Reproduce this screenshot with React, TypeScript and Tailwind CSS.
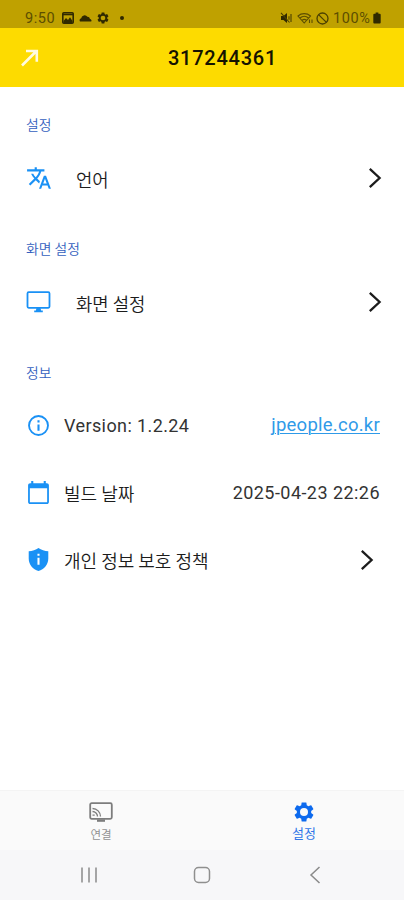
import type { ReactNode } from "react";

const latin = "font-['Roboto','Noto_Sans_CJK_KR',sans-serif]";
const korean = "font-['Noto_Sans_CJK_KR',sans-serif]";

const GEAR =
  "M19.14 12.94c.04-.3.06-.61.06-.94 0-.32-.02-.64-.07-.94l2.03-1.58c.18-.14.23-.41.12-.61l-1.92-3.32c-.12-.22-.37-.29-.59-.22l-2.39.96c-.5-.38-1.03-.7-1.62-.94l-.36-2.54c-.04-.24-.24-.41-.48-.41h-3.84c-.24 0-.43.17-.47.41l-.36 2.54c-.59.24-1.13.57-1.62.94l-2.39-.96c-.22-.08-.47 0-.59.22L2.74 8.87c-.12.21-.08.47.12.61l2.03 1.58c-.05.3-.09.63-.09.94s.02.64.07.94l-2.03 1.58c-.18.14-.23.41-.12.61l1.92 3.32c.12.22.37.29.59.22l2.39-.96c.5.38 1.03.7 1.62.94l.36 2.54c.05.24.24.41.48.41h3.84c.24 0 .44-.17.47-.41l.36-2.54c.59-.24 1.13-.56 1.62-.94l2.39.96c.22.08.47 0 .59-.22l1.92-3.32c.12-.22.07-.47-.12-.61l-2.01-1.58zM12 16a4 4 0 1 1 0-8 4 4 0 0 1 0 8z";

function Chevron() {
  return (
    <svg className="h-[22px] w-[14px]" viewBox="0 0 14 22" fill="none" stroke="#1c1c1c" strokeWidth="2.3">
      <path d="M1.8 1.8 11.6 11l-9.8 9.2" />
    </svg>
  );
}

function TranslateIcon() {
  return (
    <svg className="h-[26px] w-[26px]" viewBox="0 0 24 24" fill="#1a91f5">
      <path d="m12.87 15.07-2.54-2.51.03-.03c1.74-1.94 2.98-4.17 3.71-6.53H17V4h-7V2H8v2H1v1.99h11.17C11.5 7.92 10.44 9.75 9 11.35 8.07 10.32 7.3 9.19 6.69 8h-2c.73 1.63 1.73 3.17 2.98 4.56l-5.09 5.02L4 19l5-5 3.11 3.11.76-2.04zM18.5 10h-2L12 22h2l1.12-3h4.75L21 22h2l-4.5-12zm-2.62 7 1.62-4.33L19.12 17h-3.24z" />
    </svg>
  );
}

function MonitorIcon() {
  return (
    <svg className="h-[24px] w-[25px]" viewBox="0 0 25 24">
      <rect x="1.5" y="2.2" width="22" height="15.6" rx="1.2" fill="none" stroke="#1a91f5" strokeWidth="1.8" />
      <path d="M10.5 18h4l.6 2.5h1.7v1.7H8.2v-1.7h1.7z" fill="#1a91f5" />
    </svg>
  );
}

function InfoIcon() {
  return (
    <svg className="h-[25px] w-[25px]" viewBox="0 0 24 24" fill="#1a91f5">
      <circle cx="12" cy="12" r="9.1" fill="none" stroke="#1a91f5" strokeWidth="1.8" />
      <path d="M11 7h2v2h-2zm0 4h2v6h-2z" />
    </svg>
  );
}

function CalendarIcon() {
  return (
    <svg className="h-[25px] w-[25px]" viewBox="0 0 24 24" fill="#1a91f5">
      <path d="M20 3h-1V1h-2v2H7V1H5v2H4c-1.1 0-2 .9-2 2v16c0 1.1.9 2 2 2h16c1.1 0 2-.9 2-2V5c0-1.1-.9-2-2-2zm.3 18.3H3.7V8h16.6v13.3z" />
    </svg>
  );
}

function ShieldIcon() {
  return (
    <svg className="h-[25px] w-[25px]" viewBox="0 0 24 24">
      <path d="M12 1C9.5 3 6 4 2.6 4v7c0 5.55 4 10.7 9.4 12 5.4-1.3 9.4-6.45 9.4-12V4C18 4 14.5 3 12 1z" fill="#1a91f5" />
      <path d="M11 6.5h2v2h-2zm0 3.7h2V17h-2z" fill="#fff" />
    </svg>
  );
}

function StatusBar() {
  return (
    <div className={`flex h-7 items-start justify-between bg-[#bfa100] pt-[9px] pr-[23px] pl-[25px] text-[#5c4e00] ${latin}`}>
      <div className="flex h-[18px] items-center">
        <span className="w-[37px] pt-px text-[14.5px] leading-[18px] tracking-[0.6px]">9:50</span>
        <svg className="h-[12px] w-[12px]" viewBox="0 0 12 12" fill="none" stroke="#302900" strokeWidth="1.6">
          <rect x="0.8" y="0.8" width="10.4" height="10.4" rx="1" />
          <path d="M1 2.5h10" />
          <path d="m1.5 9 2.5-3 2 2 2-2.8L10.5 9v2h-9z" fill="#302900" stroke="none" />
        </svg>
        <svg className="ml-[5px] h-[8px] w-[13px]" viewBox="0 0 13 8" fill="#302900">
          <path d="M1 7.5a2 2 0 0 1 1.2-3.2A3.4 3.4 0 0 1 8.4 2.8 2.6 2.6 0 0 1 11 5a1.6 1.6 0 0 1 1.2 2.5z" />
        </svg>
        <svg className="ml-[4px] h-[14px] w-[14px]" viewBox="0 0 24 24" fill="#302900">
          <path d={GEAR} />
        </svg>
        <span className="ml-[10px] h-1 w-1 rounded-full bg-[#302900]" />
      </div>
      <div className="flex h-[18px] items-center">
        <svg className="h-[12px] w-[13px]" viewBox="0 0 13 12">
          <path d="M1 4h2.5L7 1v10L3.5 8H1z" fill="#302900" />
          <path d="M1 .8 9.5 10.5M9 4.2v3.6M11 2v8" stroke="#4b4000" strokeWidth="1.1" fill="none" />
        </svg>
        <svg className="ml-[4px] h-[12px] w-[17px]" viewBox="0 0 17 12" fill="none" stroke="#5c4e00" strokeWidth="1.1">
          <path d="M1 4a9.5 9.5 0 0 1 12.5 0L7.2 11zM3 6a6.5 6.5 0 0 1 8.5 0M5 8.3a3.5 3.5 0 0 1 4.5 0M12.5 11V7.5M15 7.5V11" />
        </svg>
        <svg className="ml-[2px] h-[13px] w-[13px]" viewBox="0 0 13 13" fill="none" stroke="#4b4000" strokeWidth="1.3">
          <circle cx="6.5" cy="6.5" r="5.5" />
          <path d="m2.6 2.6 7.8 7.8" />
        </svg>
        <span className="ml-[4px] w-[40px] pt-px text-[14.5px] leading-[18px] tracking-[0.6px]">100%</span>
        <svg className="h-[12px] w-[8px]" viewBox="0 0 8 13" fill="#302900">
          <path d="M2.5.5h3V2H7a1 1 0 0 1 1 1v8.5a1 1 0 0 1-1 1H1a1 1 0 0 1-1-1V3a1 1 0 0 1 1-1h1.5z" />
        </svg>
      </div>
    </div>
  );
}

function SectionLabel({ children }: { children: ReactNode }) {
  return <h2 className={`h-5 pl-[26px] text-[13.8px] font-[350] leading-5 text-[#345fbe] ${korean}`}>{children}</h2>;
}

function MenuRow({ icon, label }: { icon: ReactNode; label: string }) {
  return (
    <div className="mb-4 flex h-[88px] items-center pr-[22px] pl-[26px]">
      <div className="flex w-[50px]">{icon}</div>
      <span className={`flex-1 pt-[2px] text-[17.8px] font-[350] text-[#1c1c1c] ${korean}`}>{label}</span>
      <Chevron />
    </div>
  );
}

function KoreanLabel({ children }: { children: ReactNode }) {
  return <span className={`block pt-[2px] text-[18px] font-[350] text-[#1c1c1c] ${korean}`}>{children}</span>;
}

function InfoRow({ icon, label, children }: { icon: ReactNode; label: ReactNode; children: ReactNode }) {
  return (
    <div className="flex h-[67px] items-center pr-[24px] pl-[26px]">
      <div className="flex w-[38px]">{icon}</div>
      <div className="flex-1">{label}</div>
      {children}
    </div>
  );
}

export default function App() {
  return (
    <div className={`flex h-[900px] w-full flex-col overflow-hidden bg-white ${latin}`}>
      <StatusBar />
      <header className="flex h-[59px] items-center bg-[#fddb00]">
        <div className="w-[168px] pl-[21px]">
          <svg className="h-[18px] w-[18px]" viewBox="0 0 18 18" fill="none" stroke="#fffbe0" strokeWidth="2.6">
            <path d="M1 16.5 15.5 2M5 2h10.8v10.8" />
          </svg>
        </div>
        <h1 className="text-[20px] font-medium tracking-[0.75px] text-[#151300]">317244361</h1>
      </header>
      <main className="flex-1 pt-[27px]">
        <SectionLabel>설정</SectionLabel>
        <MenuRow icon={<TranslateIcon />} label="언어" />
        <SectionLabel>화면 설정</SectionLabel>
        <MenuRow icon={<MonitorIcon />} label="화면 설정" />
        <SectionLabel>정보</SectionLabel>
        <div className="pt-[10px]">
          <InfoRow
            icon={<InfoIcon />}
            label={<span className="text-[18px] tracking-[0.4px] text-[#333]">Version: 1.2.24</span>}
          >
            <a className="pt-px text-[18.5px] tracking-[0.25px] text-[#2f9ae8] underline decoration-1 underline-offset-2">jpeople.co.kr</a>
          </InfoRow>
          <InfoRow icon={<CalendarIcon />} label={<KoreanLabel>빌드 날짜</KoreanLabel>}>
            <span className="text-[18px] tracking-[0.45px] text-[#333]">2025-04-23 22:26</span>
          </InfoRow>
          <InfoRow icon={<ShieldIcon />} label={<KoreanLabel>개인 정보 보호 정책</KoreanLabel>}>
            <div className="flex pr-[6px]">
              <Chevron />
            </div>
          </InfoRow>
        </div>
      </main>
      <nav className={`grid h-[60px] grid-cols-2 border-t border-[#f4f4f4] bg-[#fafafa] ${korean}`}>
        <div className="flex flex-col items-center pt-[11px] text-[#929292]">
          <svg className="h-[20px] w-[24px]" viewBox="0 0 24 20" fill="none" stroke="#7d7d7d" strokeWidth="1.8">
            <rect x="1.2" y="1.2" width="21.6" height="15.6" rx="1.5" />
            <path d="M8 18.6h8" strokeWidth="2.4" />
            <path d="M3.5 6.5a8 8 0 0 1 8 8M3.5 9.5a5 5 0 0 1 5 5M3.5 13.2h2.2" strokeWidth="1.3" />
          </svg>
          <span className="mt-[4px] text-[11.5px] leading-4">연결</span>
        </div>
        <div className="flex flex-col items-center pt-[9px] pl-[2px] text-[#2f76e8]">
          <svg className="h-[24px] w-[24px]" viewBox="0 0 24 24" fill="#0d6aee">
            <path d={GEAR} />
          </svg>
          <span className="mt-px text-[13px] leading-4">설정</span>
        </div>
      </nav>
      <div className="flex h-[50px] items-center bg-[#f7f7f9] pl-[80px]">
        <svg className="h-[18px] w-[18px]" viewBox="0 0 18 18" fill="none" stroke="#8a8a8a" strokeWidth="1.5">
          <path d="M2 1.5v15M9 1.5v15M16 1.5v15" />
        </svg>
        <svg className="ml-[95px] h-[18px] w-[18px]" viewBox="0 0 18 18" fill="none" stroke="#8f8f8f" strokeWidth="1.5">
          <rect x="1.5" y="1.5" width="15" height="15" rx="4" />
        </svg>
        <svg className="ml-[98px] h-[18px] w-[12px]" viewBox="0 0 12 18" fill="none" stroke="#8a8a8a" strokeWidth="1.5">
          <path d="M10.5 1 2 9l8.5 8" />
        </svg>
      </div>
    </div>
  );
}
